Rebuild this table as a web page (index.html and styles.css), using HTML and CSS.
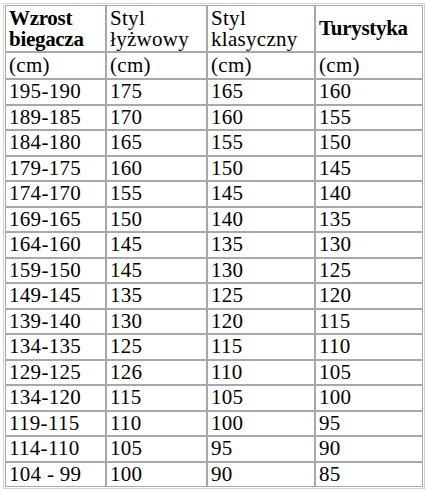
FILE: index.html
```html
<!DOCTYPE html>
<html lang="pl">
<head>
<meta charset="utf-8">
<title>Tabela długości nart</title>
<link rel="stylesheet" href="styles.css">
</head>
<body>
<table class="sizes">
  <colgroup>
    <col class="c1"><col class="c2"><col class="c3"><col class="c4">
  </colgroup>
  <tr class="head">
    <td class="b">Wzrost biegacza</td>
    <td>Styl łyżwowy</td>
    <td>Styl klasyczny</td>
    <td class="b">Turystyka</td>
  </tr>
  <tr class="unit"><td>(cm)</td><td>(cm)</td><td>(cm)</td><td>(cm)</td></tr>
  <tr><td>195-190</td><td>175</td><td>165</td><td>160</td></tr>
  <tr><td>189-185</td><td>170</td><td>160</td><td>155</td></tr>
  <tr><td>184-180</td><td>165</td><td>155</td><td>150</td></tr>
  <tr><td>179-175</td><td>160</td><td>150</td><td>145</td></tr>
  <tr><td>174-170</td><td>155</td><td>145</td><td>140</td></tr>
  <tr><td>169-165</td><td>150</td><td>140</td><td>135</td></tr>
  <tr><td>164-160</td><td>145</td><td>135</td><td>130</td></tr>
  <tr><td>159-150</td><td>145</td><td>130</td><td>125</td></tr>
  <tr><td>149-145</td><td>135</td><td>125</td><td>120</td></tr>
  <tr><td>139-140</td><td>130</td><td>120</td><td>115</td></tr>
  <tr><td>134-135</td><td>125</td><td>115</td><td>110</td></tr>
  <tr><td>129-125</td><td>126</td><td>110</td><td>105</td></tr>
  <tr><td>134-120</td><td>115</td><td>105</td><td>100</td></tr>
  <tr><td>119-115</td><td>110</td><td>100</td><td>95</td></tr>
  <tr><td>114-110</td><td>105</td><td>95</td><td>90</td></tr>
  <tr><td>104 - 99</td><td>100</td><td>90</td><td>85</td></tr>
</table>
</body>
</html>
```
FILE: styles.css
```css
html, body {
  margin: 0;
  padding: 0;
  background: #ffffff;
}

body {
  font-family: "Liberation Serif", "Times New Roman", serif;
  font-size: 21px;
  color: #000000;
}

.sizes {
  margin: 3px 0 0 3px;
  border: 1px solid #d2d2d2;
  padding: 1px;
  border-spacing: 0;
  table-layout: fixed;
  width: 422px;
}

.c1, .c2 { width: 101px; }
.c3, .c4 { width: 108px; }

.sizes td {
  border: 1px solid #a8a8a8;
  padding: 0 1px 0 3px;
  line-height: 21px;
  vertical-align: middle;
  text-align: left;
  white-space: normal;
  letter-spacing: 0.3px;
}

.sizes tr { height: 25.5px; }
.sizes tr.head { height: 47px; }
.sizes tr.unit { height: 27px; }

.sizes td.b {
  font-weight: bold;
  letter-spacing: -0.3px;
}
```
